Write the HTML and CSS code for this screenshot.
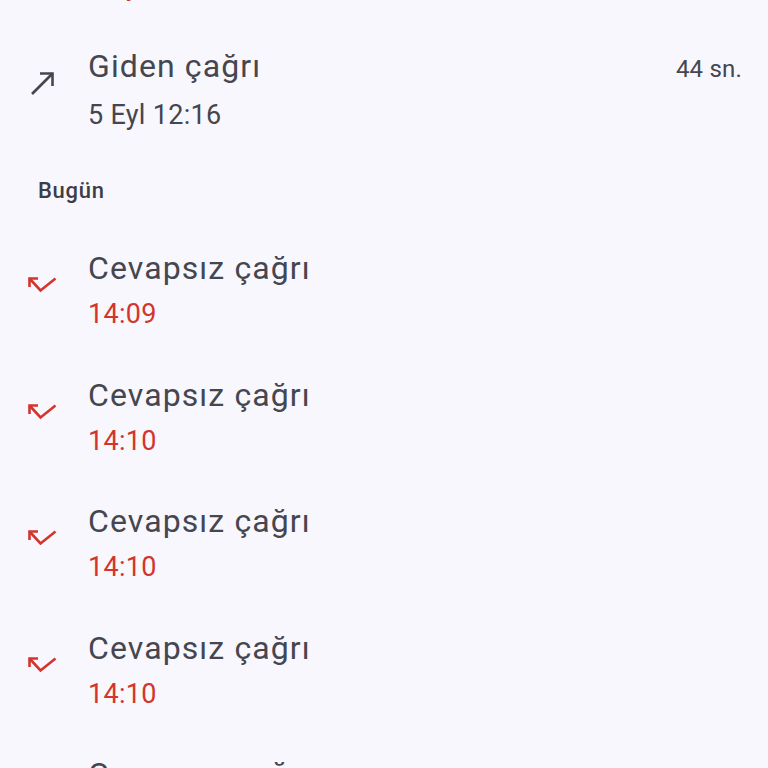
FILE: index.html
```html
<!DOCTYPE html>
<html>
<head>
    <meta charset="UTF-8">
    <meta name="viewport" content="width=device-width, initial-scale=1.0">
    <title>Arama geçmişi</title>
    <link rel="stylesheet" href="styles.css">
</head>
<body>
    <!-- arama listesi -->
    <div class="call_list">
        <!-- ekranın üstünde kesilen satır -->
        <div class="call_row">
            <div class="call_icon missed_icon">
                <svg width="30" height="20" viewBox="0 0 30 20"><polyline points="11,3.5 2.5,3.5 2.5,12" /><polyline points="2.5,3.5 13.5,15.5 28.5,3.5" /></svg>
            </div>
            <div class="call_text">
                <div class="call_top"><span class="call_title">Cevapsız çağrı</span></div>
                <div class="call_sub missed">5 Eyl 12:15</div>
            </div>
        </div>

        <div class="call_row">
            <div class="call_icon out_icon">
                <svg width="30" height="30" viewBox="0 0 30 30"><polyline points="13,2.5 25.5,2.5 25.5,15" /><line x1="25.5" y1="2.5" x2="5" y2="23" /></svg>
            </div>
            <div class="call_text">
                <div class="call_top"><span class="call_title">Giden çağrı</span><span class="call_dur">44 sn.</span></div>
                <div class="call_sub">5 Eyl 12:16</div>
            </div>
        </div>

        <div class="day_head">Bugün</div>

        <div class="call_row">
            <div class="call_icon missed_icon">
                <svg width="30" height="20" viewBox="0 0 30 20"><polyline points="11,3.5 2.5,3.5 2.5,12" /><polyline points="2.5,3.5 13.5,15.5 28.5,3.5" /></svg>
            </div>
            <div class="call_text">
                <div class="call_top"><span class="call_title">Cevapsız çağrı</span></div>
                <div class="call_sub missed">14:09</div>
            </div>
        </div>

        <div class="call_row">
            <div class="call_icon missed_icon">
                <svg width="30" height="20" viewBox="0 0 30 20"><polyline points="11,3.5 2.5,3.5 2.5,12" /><polyline points="2.5,3.5 13.5,15.5 28.5,3.5" /></svg>
            </div>
            <div class="call_text">
                <div class="call_top"><span class="call_title">Cevapsız çağrı</span></div>
                <div class="call_sub missed">14:10</div>
            </div>
        </div>

        <div class="call_row">
            <div class="call_icon missed_icon">
                <svg width="30" height="20" viewBox="0 0 30 20"><polyline points="11,3.5 2.5,3.5 2.5,12" /><polyline points="2.5,3.5 13.5,15.5 28.5,3.5" /></svg>
            </div>
            <div class="call_text">
                <div class="call_top"><span class="call_title">Cevapsız çağrı</span></div>
                <div class="call_sub missed">14:10</div>
            </div>
        </div>

        <div class="call_row">
            <div class="call_icon missed_icon">
                <svg width="30" height="20" viewBox="0 0 30 20"><polyline points="11,3.5 2.5,3.5 2.5,12" /><polyline points="2.5,3.5 13.5,15.5 28.5,3.5" /></svg>
            </div>
            <div class="call_text">
                <div class="call_top"><span class="call_title">Cevapsız çağrı</span></div>
                <div class="call_sub missed">14:10</div>
            </div>
        </div>

        <div class="call_row">
            <div class="call_icon missed_icon">
                <svg width="30" height="20" viewBox="0 0 30 20"><polyline points="11,3.5 2.5,3.5 2.5,12" /><polyline points="2.5,3.5 13.5,15.5 28.5,3.5" /></svg>
            </div>
            <div class="call_text">
                <div class="call_top"><span class="call_title">Cevapsız çağrı</span></div>
                <div class="call_sub missed">14:10</div>
            </div>
        </div>
    </div>
</body>
</html>
```

FILE: styles.css
```css
/*ortak stiller*/
*{margin:0;padding:0;box-sizing:border-box;}
html,body{width:100%;height:100%;}
body{background:#f8f7fd;font-family:Roboto,"Noto Sans",sans-serif;color:#45464f;overflow:hidden;}

/*liste: ilk satır ekranın üstünden taşıyor*/
.call_list{margin-top:-100.5px;}

/*tek arama satırı*/
.call_row{display:flex;height:126.5px;padding:17.25px 26px 17.25px 0;}
.call_icon{width:88px;flex-shrink:0;padding-left:27px;}
.call_icon svg{display:block;fill:none;stroke-width:2.6;}
.missed_icon svg{margin-top:30px;stroke:#d3352d;}
.out_icon svg{margin-top:28px;stroke:#45464f;}

.call_text{flex:1;}
.call_top{display:flex;justify-content:space-between;align-items:baseline;}
.call_title{font-size:32px;line-height:46px;letter-spacing:1.1px;}
.call_dur{font-size:24px;line-height:46px;letter-spacing:0.2px;}
.call_sub{font-size:27px;line-height:46px;letter-spacing:0.3px;}
.call_sub.missed{color:#d3352d;}

/*gün başlığı*/
.day_head{height:75.5px;padding-left:38px;font-size:22px;font-weight:500;line-height:75.5px;letter-spacing:0.7px;color:#3c3d45;}
```
